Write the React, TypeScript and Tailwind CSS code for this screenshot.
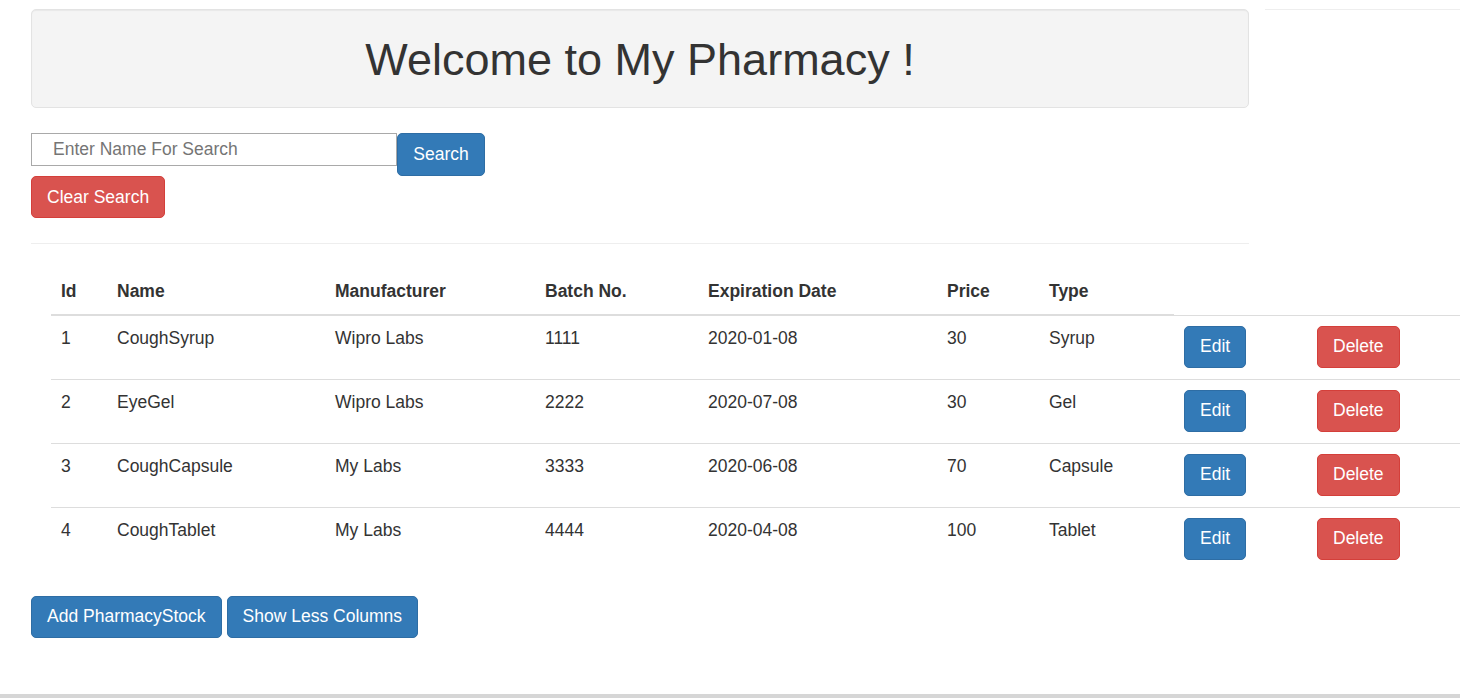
import React from "react";

const rows = [
  { id: 1, name: "CoughSyrup", man: "Wipro Labs", batch: "1111", exp: "2020-01-08", price: "30", type: "Syrup" },
  { id: 2, name: "EyeGel", man: "Wipro Labs", batch: "2222", exp: "2020-07-08", price: "30", type: "Gel" },
  { id: 3, name: "CoughCapsule", man: "My Labs", batch: "3333", exp: "2020-06-08", price: "70", type: "Capsule" },
  { id: 4, name: "CoughTablet", man: "My Labs", batch: "4444", exp: "2020-04-08", price: "100", type: "Tablet" },
];

const btnPrimary =
  "h-[42px] px-[15px] rounded-[5px] border border-[#2e6da4] bg-[#337ab7] text-white text-[17.5px] leading-[25px] whitespace-nowrap";
const btnDanger =
  "h-[42px] px-[15px] rounded-[5px] border border-[#d43f3a] bg-[#d9534f] text-white text-[17.5px] leading-[25px] whitespace-nowrap";

const headers = ["Id", "Name", "Manufacturer", "Batch No.", "Expiration Date", "Price", "Type"];
const widths = [56, 218, 210, 163, 239, 102, 135, 133, 220];

export default function App() {
  return (
    <div className="w-[1460px] h-[698px] overflow-hidden bg-white font-['Liberation_Sans',Arial,Helvetica,sans-serif] text-[17.5px] leading-[25px] text-[#333] flex flex-col">
      <div className="flex-1 min-h-0">
        <div className="flex pt-[9px]">
          <div className="ml-[31px] w-[1218px] shrink-0">
            <div className="h-[99px] pt-[3px] rounded-[5px] border border-[#e3e3e3] bg-[#f4f4f4] shadow-[inset_0_1px_1px_rgba(0,0,0,0.05)] flex items-center justify-center">
              <h1 className="text-[45px] leading-[50px] font-normal text-[#333]">Welcome to My Pharmacy !</h1>
            </div>
            <div className="mt-[25px] flex items-start">
              <input
                className="w-[366px] h-[33px] border border-[#a9a9a9] pl-[21px] text-[17.5px] placeholder:text-[#757575] outline-none"
                placeholder="Enter Name For Search"
              />
              <button className={btnPrimary + " w-[88px] h-[43px]"}>Search</button>
            </div>
            <div>
              <button className={btnDanger}>Clear Search</button>
            </div>
            <div className="mt-[25px] border-t border-[#eee]" />
          </div>
          <div className="ml-[16px] flex-1 border-t border-[#eee]" />
        </div>

        <table className="mt-[25px] ml-[51px] w-[1476px] table-fixed border-collapse">
          <colgroup>
            {widths.map((w, i) => (
              <col key={i} style={{ width: w }} />
            ))}
          </colgroup>
          <thead>
            <tr>
              {headers.map((h) => (
                <th
                  key={h}
                  className="px-[10px] py-[10px] text-left font-bold align-bottom border-b-2 border-[#ddd] whitespace-nowrap"
                >
                  {h}
                </th>
              ))}
            </tr>
          </thead>
          <tbody>
            {rows.map((r) => (
              <tr key={r.id}>
                <td className="px-[10px] pt-[10px] pb-[11px] align-top border-t border-[#ddd]">{r.id}</td>
                <td className="px-[10px] pt-[10px] pb-[11px] align-top border-t border-[#ddd]">{r.name}</td>
                <td className="px-[10px] pt-[10px] pb-[11px] align-top border-t border-[#ddd]">{r.man}</td>
                <td className="px-[10px] pt-[10px] pb-[11px] align-top border-t border-[#ddd]">{r.batch}</td>
                <td className="px-[10px] pt-[10px] pb-[11px] align-top border-t border-[#ddd]">{r.exp}</td>
                <td className="px-[10px] pt-[10px] pb-[11px] align-top border-t border-[#ddd]">{r.price}</td>
                <td className="px-[10px] pt-[10px] pb-[11px] align-top border-t border-[#ddd]">{r.type}</td>
                <td className="px-[10px] pt-[10px] pb-[11px] align-top border-t border-[#ddd]">
                  <button className={btnPrimary}>Edit</button>
                </td>
                <td className="px-[10px] pt-[10px] pb-[11px] align-top border-t border-[#ddd]">
                  <button className={btnDanger}>Delete</button>
                </td>
              </tr>
            ))}
          </tbody>
        </table>

        <div className="mt-[25px] ml-[31px] flex gap-[5px]">
          <button className={btnPrimary}>Add PharmacyStock</button>
          <button className={btnPrimary}>Show Less Columns</button>
        </div>
      </div>
      <div className="h-[4px] bg-[#d6d6d6]" />
    </div>
  );
}
